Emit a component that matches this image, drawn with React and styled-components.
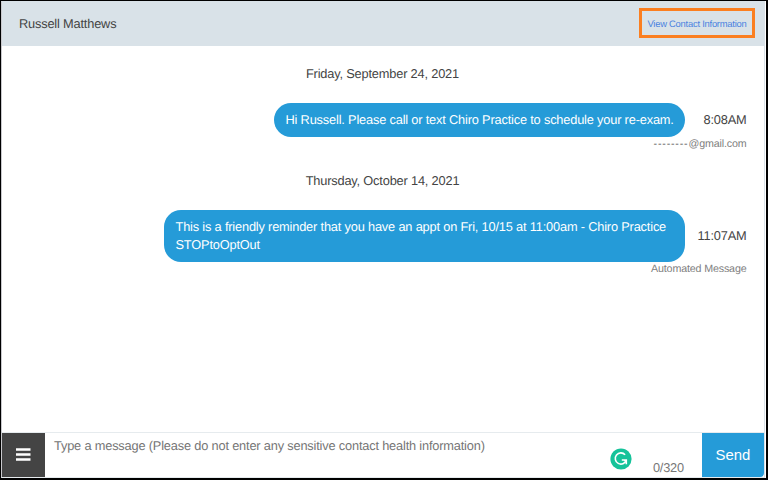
import React from "react";
import styled, { createGlobalStyle } from "styled-components";

const Global = createGlobalStyle`
  * { box-sizing: border-box; }
  body { margin: 0; background: #fff; font-family: "Liberation Sans", Arial, sans-serif; }
`;
const Frame = styled.main`
  width: 768px;
  height: 480px;
  display: flex;
  flex-direction: column;
  border: solid #000;
  border-width: 1px 2px 2px 1px;
  background: #fff;
  overflow: hidden;
  color: #444;
  font-size: 12.8px;
  letter-spacing: -0.18px;
  text-rendering: geometricPrecision;
`;
const Panel = styled.div`
  flex: 1;
  min-height: 0;
  display: flex;
  flex-direction: column;
  margin-right: 1px;
  border: 1px solid #d9e2e8;
  border-left-color: #c9c9cd;
  border-bottom-color: #e6ebee;
`;
const Header = styled.header`
  flex: none;
  height: 44px;
  display: flex;
  align-items: center;
  justify-content: space-between;
  padding: 0 9px 0 17px;
  background: #d9e2e8;
`;
const Name = styled.div`
  line-height: 16px;
  padding-bottom: 1px;
`;
const ContactLink = styled.a`
  width: 116px;
  height: 30px;
  display: flex;
  align-items: center;
  justify-content: center;
  margin-bottom: 2px;
  border: 3px solid #fb7f21;
  color: #4a82e0;
  font-size: 9.4px;
  letter-spacing: -0.23px;
  white-space: nowrap;
`;
const Thread = styled.section`
  flex: 1;
  min-height: 0;
  padding: 19px 17.5px 0 9px;
`;
const DateLine = styled.div`
  height: 18px;
  line-height: 18px;
  text-align: center;
  margin-bottom: 20px;
  padding-left: 7.5px;
`;
const Message = styled.article`
  margin-bottom: 20px;
`;
const MessageRow = styled.div`
  display: flex;
  align-items: center;
  justify-content: flex-end;
`;
const Bubble = styled.div`
  width: ${(p) => p.$width}px;
  padding: 8px 0 8px 12px;
  border-radius: 17px;
  background: #259bd8;
  color: #fff;
  line-height: 18px;
  white-space: nowrap;
`;
const Time = styled.time`
  width: 62px;
  padding-bottom: 2px;
  text-align: right;
`;
const Caption = styled.div`
  display: flex;
  align-items: center;
  justify-content: flex-end;
  height: 15px;
  padding-bottom: 2px;
  color: #808080;
  font-size: 10.7px;
  letter-spacing: -0.15px;
`;
const Redacted = styled.span`
  letter-spacing: 0.8px;
  color: #555;
`;
const Composer = styled.footer`
  flex: none;
  height: 45px;
  display: flex;
  border-top: 1px solid #e6ebee;
`;
const MenuButton = styled.button`
  width: 43px;
  padding: 0 1px 0 0;
  border: 0;
  background: #444;
  display: flex;
  align-items: center;
  justify-content: center;
`;
const Field = styled.div`
  flex: 1;
  display: flex;
  justify-content: space-between;
  padding: 4px 18px 0 9px;
  color: #757575;
`;
const Placeholder = styled.div`
  line-height: 17px;
  white-space: nowrap;
`;
const Tools = styled.div`
  display: flex;
  align-items: flex-start;
  gap: 21px;
  padding-top: 11px;
`;
const Counter = styled.div`
  line-height: 16px;
  padding-top: 12px;
  color: #777;
`;
const SendButton = styled.button`
  width: 62px;
  padding: 0;
  border: 0;
  border-radius: 0 0 4px 0;
  background: #259bd8;
  color: #fff;
  font: 14.9px "Liberation Sans", Arial, sans-serif;
`;

function MenuIcon() {
  return (
    <svg width="16" height="14" viewBox="0 0 16 14">
      <path d="M1 1.5h14.5M1 6.5h14.5M1 11.5h14.5" stroke="#fff" strokeWidth="2.3" />
    </svg>
  );
}
function AssistantIcon() {
  return (
    <svg width="22" height="22" viewBox="0 0 22 22">
      <circle cx="11" cy="11" r="10.6" fill="#15c39a" />
      <path d="M15.1 6.8A5.6 5.6 0 1 0 16.2 12.2" fill="none" stroke="#fff" strokeWidth="1.6" />
      <path d="M11.8 12h4.5v4.2" fill="none" stroke="#fff" strokeWidth="1.6" />
      <path d="M13.5 12h3.2v3.2z" fill="#fff" />
    </svg>
  );
}

export default function App() {
  return (
    <Frame>
      <Global />
      <Panel>
        <Header>
          <Name>Russell Matthews</Name>
          <ContactLink>View Contact Information</ContactLink>
        </Header>
        <Thread>
          <DateLine>Friday, September 24, 2021</DateLine>
          <Message>
            <MessageRow>
              <Bubble $width={411}>Hi Russell. Please call or text Chiro Practice to schedule your re-exam.</Bubble>
              <Time>8:08AM</Time>
            </MessageRow>
            <Caption><Redacted>--------</Redacted>@gmail.com</Caption>
          </Message>
          <DateLine>Thursday, October 14, 2021</DateLine>
          <Message>
            <MessageRow>
              <Bubble $width={521}>
                This is a friendly reminder that you have an appt on Fri, 10/15 at 11:00am - Chiro Practice
                <br />
                STOPtoOptOut
              </Bubble>
              <Time>11:07AM</Time>
            </MessageRow>
            <Caption>Automated Message</Caption>
          </Message>
        </Thread>
        <Composer>
          <MenuButton aria-label="Menu"><MenuIcon /></MenuButton>
          <Field>
            <Placeholder>Type a message (Please do not enter any sensitive contact health information)</Placeholder>
            <Tools>
              <AssistantIcon />
              <Counter>0/320</Counter>
            </Tools>
          </Field>
          <SendButton>Send</SendButton>
        </Composer>
      </Panel>
    </Frame>
  );
}
